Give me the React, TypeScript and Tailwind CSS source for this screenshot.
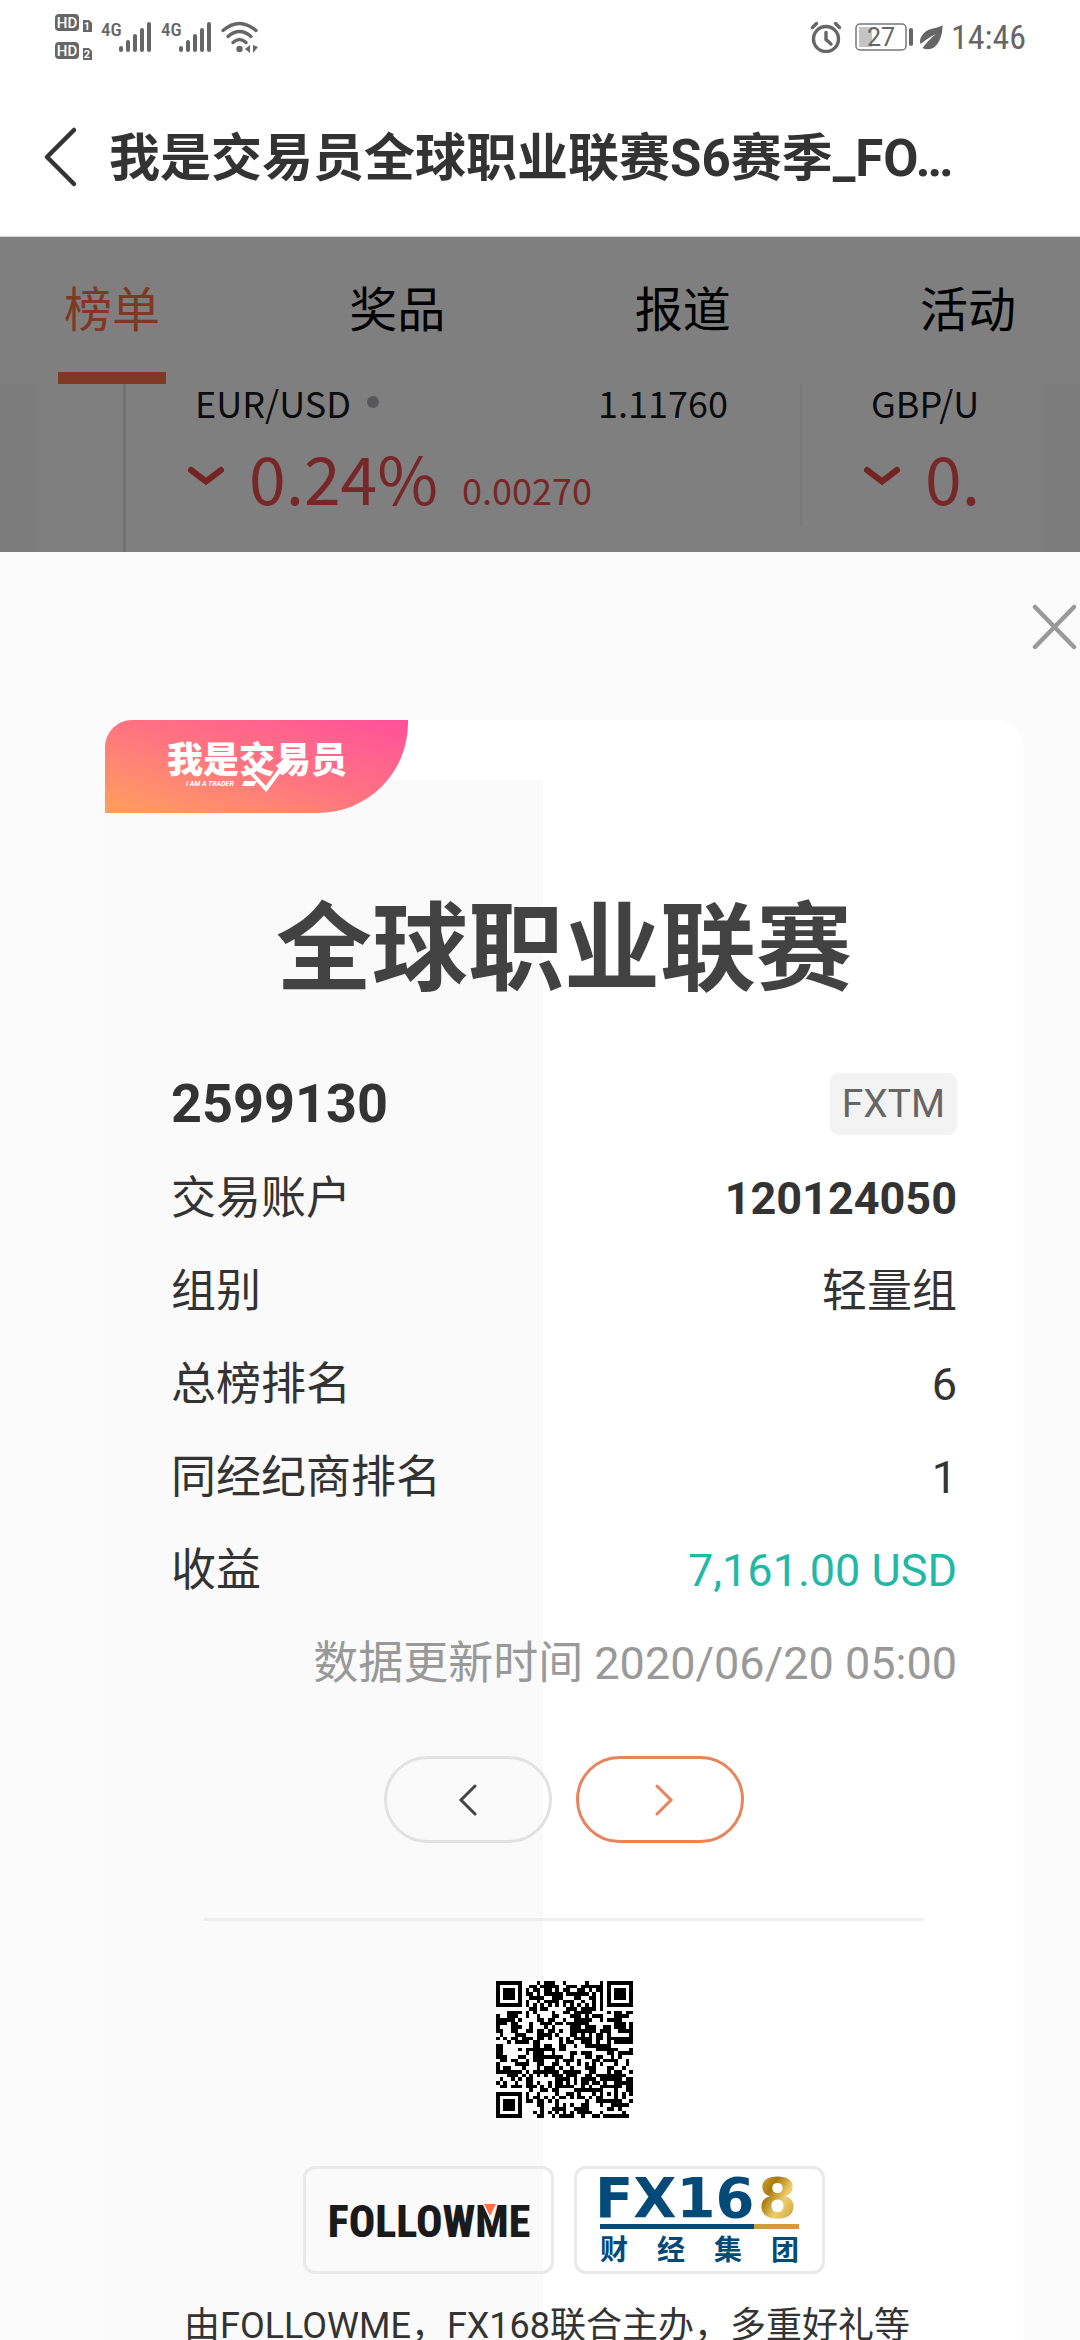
import { Fragment } from "react";

interface Quote {
  pair: string;
  price?: string;
  percent: string;
  change?: string;
}

interface DetailRow {
  label: string;
  value: string;
  valueClass?: string;
}

const tabs = ["榜单", "奖品", "报道", "活动"];

const quotes: Quote[] = [
  { pair: "EUR/USD", price: "1.11760", percent: "0.24%", change: "0.00270" },
  { pair: "GBP/U", percent: "0." },
];

const details: DetailRow[] = [
  { label: "交易账户", value: "120124050", valueClass: "font-bold" },
  { label: "组别", value: "轻量组" },
  { label: "总榜排名", value: "6" },
  { label: "同经纪商排名", value: "1" },
  { label: "收益", value: "7,161.00 USD", valueClass: "text-[#22b8a6]" },
];

function HdIcon({ index }: { index: string }) {
  return (
    <svg width="38" height="18" viewBox="0 0 38 18" className="overflow-visible">
      <rect x="0" y="0" width="24" height="17" rx="4" fill="#666" />
      <text x="12" y="14" fontSize="15" fontWeight="500" textAnchor="middle" fill="#fff">
        HD
      </text>
      <path d="M28 6h6l3 3v9h-9z" fill="#666" />
      <text x="32" y="16" fontSize="11" fontWeight="700" textAnchor="middle" fill="#fff">
        {index}
      </text>
    </svg>
  );
}

function SignalIcon() {
  return (
    <svg width="52" height="32" viewBox="0 0 52 32" fill="#666" className="overflow-visible">
      <text x="0" y="15" fontSize="19" fontWeight="500" className="font-['Roboto_Condensed',Roboto]">
        4G
      </text>
      <rect x="18" y="25" width="4" height="6" rx="2" />
      <rect x="25" y="19" width="4" height="12" rx="2" />
      <rect x="32" y="13" width="4" height="18" rx="2" />
      <rect x="39" y="7" width="4" height="24" rx="2" />
      <rect x="46" y="1" width="4" height="30" rx="2" />
    </svg>
  );
}

function WifiIcon() {
  return (
    <svg width="38" height="32" viewBox="0 0 38 32" fill="none" stroke="#666" strokeWidth="3.4" strokeLinecap="round">
      <path d="M2 9.500Q18.500 -4.500 35 9.500" />
      <path d="M7 15.500Q18.500 5.500 30 15.500" />
      <path d="M12 21.500Q18.500 15.500 25 21.500" />
      <circle cx="18.500" cy="28" r="3.200" fill="#666" stroke="none" />
      <path d="M24 28l5-4v8zM32 24v8l5-6z" fill="#666" stroke="none" />
    </svg>
  );
}

function AlarmIcon() {
  return (
    <svg width="32" height="32" viewBox="0 0 32 32" fill="none" stroke="#666" strokeWidth="3.400" strokeLinecap="round">
      <circle cx="16" cy="18" r="12.500" />
      <path d="M16 11.500v7l5 4.500" />
      <path d="M2.500 6.500l4-4M29.500 6.500l-4-4" />
    </svg>
  );
}

function StatusBar() {
  return (
    <div className="flex h-[78px] items-center justify-between pl-[55px] pr-[54px] pb-1">
      <div className="flex items-center gap-2">
        <div className="flex flex-col gap-[10px]">
          <HdIcon index="1" />
          <HdIcon index="2" />
        </div>
        <SignalIcon />
        <SignalIcon />
        <WifiIcon />
      </div>
      <div className="flex items-center text-[#666]">
        <AlarmIcon />
        <svg className="ml-[13px]" width="60" height="28" viewBox="0 0 60 28">
          <rect x="1" y="1" width="50" height="26" rx="4" fill="none" stroke="#777" strokeWidth="1.500" />
          <rect x="4" y="4" width="13" height="20" fill="#c4c4c4" />
          <text x="26" y="23" fontSize="25" textAnchor="middle" fill="#666">
            27
          </text>
          <rect x="54" y="5" width="4" height="18" rx="2" fill="#666" />
        </svg>
        <svg className="ml-[5px]" width="23" height="25" viewBox="0 0 23 25">
          <path
            d="M22.500 0C18 4 10 2 4 8C0 12-0.500 16 0.500 19C5 15 10 12 16 9C10 14 6 18 2.500 23C7 25.500 13 24.500 17 19.500C21 14 22.500 8 22.500 0z"
            fill="#666"
          />
        </svg>
        <span className="ml-2 font-['Roboto_Condensed',Roboto,sans-serif] text-[34px] leading-10">14:46</span>
      </div>
    </div>
  );
}

function TickerItem({ quote }: { quote: Quote }) {
  return (
    <div className="flex w-[676px] shrink-0">
      <div className="flex-1 pl-[61px] pr-[72px]">
        <div className="flex items-center justify-between pl-2 text-[36px] leading-9 text-[#15161a]">
          <span className="flex items-center gap-4">
            {quote.pair}
            {quote.price && <i className="size-3 rounded-full bg-[#aeaeb2]" />}
          </span>
          <span>{quote.price}</span>
        </div>
        <div className="mt-4 flex items-baseline text-[#ee4f4f]">
          <svg
            width="38"
            height="22"
            viewBox="0 0 38 22"
            className="shrink-0 self-center"
            fill="none"
            stroke="#e84646"
            strokeWidth="6"
            strokeLinecap="round"
          >
            <path d="M4 5l15 11.500L34 5" />
          </svg>
          <span className="ml-6 text-[66px] leading-[80px]">{quote.percent}</span>
          <span className="ml-6 text-[36px]">{quote.change}</span>
        </div>
      </div>
      <div className="h-[143px] w-[2px] bg-[#f2f2f2]" />
    </div>
  );
}

// Version 5 symbol: 37 modules a side, three finders and one alignment mark.
const QR_SIZE = 37;

function ring(dx: number, dy: number, outer: number) {
  const d = Math.max(Math.abs(dx), Math.abs(dy));
  if (outer === 3) return d === 3 || d <= 1;
  return d === 2 || d === 0;
}

function buildQrPath() {
  let seed = 2599130;
  let path = "";
  for (let y = 0; y < QR_SIZE; y++) {
    for (let x = 0; x < QR_SIZE; x++) {
      seed = (seed * 1103515245 + 12345) % 2147483648;
      let dark = seed / 2147483648 > 0.46;
      if (x === 6 && y > 7 && y < 29) dark = y % 2 === 0;
      if (y === 6 && x > 7 && x < 29) dark = x % 2 === 0;
      for (const [cx, cy] of [[3, 3], [33, 3], [3, 33]]) {
        const far = Math.max(Math.abs(x - cx), Math.abs(y - cy));
        if (far <= 4) dark = far < 4 && ring(x - cx, y - cy, 3);
      }
      if (Math.abs(x - 30) <= 2 && Math.abs(y - 30) <= 2) dark = ring(x - 30, y - 30, 2);
      if (dark) path += `M${x} ${y}h1v1h-1z`;
    }
  }
  return path;
}

function QrCode() {
  return (
    <svg className="size-[137px] bg-white" viewBox="0 0 37 37" shapeRendering="crispEdges" role="img">
      <path d={buildQrPath()} fill="#000" />
    </svg>
  );
}

function BrandRibbon() {
  return (
    <div className="h-[93px] w-[303px] rounded-tl-[27px] rounded-br-[90px] bg-linear-to-tr from-[#ff9f5a] via-[#ff7380] to-[#ff4f9a]">
      <svg width="303" height="93" viewBox="0 0 303 93" fill="#fff">
        <text x="62" y="53" fontSize="36" fontWeight="900" className="font-['Noto_Sans_CJK_SC']">
          我是交易员
        </text>
        <text x="81" y="66" fontSize="7" fontWeight="700" fontStyle="italic">
          I AM A TRADER
        </text>
        <path d="M139 61h13l-3 5h-12z" />
        <path d="M140 46l21 23 17-23" fill="none" stroke="#fff" strokeWidth="4" />
        <path d="M182 43l-2 10-7-6z" />
      </svg>
    </div>
  );
}

function FollowmeLogo() {
  return (
    <svg width="202" height="40" viewBox="0 0 202 40" className="overflow-visible">
      <text x="101" y="37" fontSize="44" fontWeight="800" fill="#1a1a1a" textAnchor="middle" className="font-['Roboto_Condensed',Roboto]">
        FOLLOWME
      </text>
      <path d="M154 3h16l-8 17z" fill="#fafafa" />
      <path d="M156 4h12l-6 12z" fill="#ff7043" />
    </svg>
  );
}

function Fx168Logo() {
  return (
    <div className="flex w-[199px] flex-col text-[#034a78]">
      <svg width="199" height="58" viewBox="0 0 199 58" className="overflow-visible">
        <defs>
          <linearGradient id="gold" x1="0" y1="0" x2="1" y2="1">
            <stop offset="0" stopColor="#e8c25a" />
            <stop offset="0.35" stopColor="#a87a10" />
            <stop offset="0.6" stopColor="#f0cf70" />
            <stop offset="1" stopColor="#b98c22" />
          </linearGradient>
        </defs>
        <text x="-5" y="46" fontSize="56" fontWeight="700" fill="#034a78" className="font-['DejaVu_Sans']">
          FX16
        </text>
        <text x="158" y="46" fontSize="56" fontWeight="700" fill="url(#gold)" className="font-['DejaVu_Sans']">
          8
        </text>
        <rect x="0" y="53" width="154" height="5" fill="#034a78" />
        <rect x="154" y="53" width="45" height="5" fill="#cc9f3c" />
      </svg>
      <div className="flex justify-between pt-1 text-[28px] leading-9 font-bold">
        {["财", "经", "集", "团"].map((char) => (
          <span key={char}>{char}</span>
        ))}
      </div>
    </div>
  );
}

export default function App() {
  return (
    <div className="flex h-screen flex-col overflow-hidden bg-white font-[Roboto,'Noto_Sans_CJK_SC',sans-serif] text-[#333]">
      <header className="shrink-0 border-b border-[#d8d8d8]">
        <StatusBar />
        <div className="flex h-[158px] items-center pl-[43px]">
          <button type="button" aria-label="返回">
            <svg
              width="36"
              height="62"
              viewBox="0 0 36 62"
              fill="none"
              stroke="#333"
              strokeWidth="4.500"
              strokeLinecap="round"
              strokeLinejoin="round"
            >
              <path d="M31 4L4 31l27 27" />
            </svg>
          </button>
          <h1 className="ml-[30px] pt-1 text-[51px] font-bold whitespace-nowrap">我是交易员全球职业联赛S6赛季_FO…</h1>
        </div>
      </header>

      <div className="relative h-[315px] shrink-0 overflow-hidden bg-white">
        <nav className="flex h-[147px] justify-between px-[58px]">
          {tabs.map((tab, index) => (
            <a
              key={tab}
              href="#"
              className={
                index === 0
                  ? "flex w-[108px] items-center justify-center border-b-12 border-[#ff7043] pt-3 text-[48px] leading-[64px] text-[#ff7043]"
                  : "flex w-[108px] items-center justify-center border-b-12 border-transparent pt-3 text-[48px] leading-[64px] text-black"
              }
            >
              {tab}
            </a>
          ))}
        </nav>
        <div className="flex h-[168px] bg-[#f8f8f8] px-[38px]">
          <div className="flex w-full bg-white pl-[85px] pr-[62px]">
            <div className="w-[3px] shrink-0 bg-[#e2e2e2]" />
            <div className="flex min-w-0 flex-1 overflow-hidden font-['Noto_Sans_CJK_SC',sans-serif]">
              {quotes.map((quote) => (
                <TickerItem key={quote.pair} quote={quote} />
              ))}
            </div>
          </div>
        </div>
        <div className="absolute inset-0 bg-black/50" />
      </div>

      <main className="flex flex-1 flex-col bg-[#fbfbfb]">
        <div className="flex h-[168px] shrink-0 items-start justify-end pt-[52px] pr-[3px]">
          <button type="button" aria-label="关闭">
            <svg width="46" height="46" viewBox="0 0 46 46" stroke="#999" strokeWidth="4.500" strokeLinecap="round">
              <path d="M4 3l39 40M43 3L4 43" />
            </svg>
          </button>
        </div>

        <section className="relative mr-[57px] ml-[105px] flex-1 rounded-t-[27px] bg-white">
          <div className="absolute top-[60px] bottom-0 left-0 w-[438px] bg-[#fafafa]" />
          <div className="relative">
            <BrandRibbon />
            <h2 className="mt-[70px] text-center text-[96px] leading-[132px] font-bold text-[#424242]">全球职业联赛</h2>

            <div className="mt-10 px-[66px] text-[45px]">
              <div className="flex h-[97px] items-center justify-between">
                <strong className="text-[54px]">2599130</strong>
                <span className="rounded-[9px] bg-[#f3f3f3] px-3 text-[39px] leading-[62px] text-[#666]">FXTM</span>
              </div>
              <dl className="grid grid-cols-[auto_auto] justify-between">
                {details.map((row) => (
                  <Fragment key={row.label}>
                    <dt className="leading-[93px]">{row.label}</dt>
                    <dd className={`text-right leading-[93px] ${row.valueClass ?? ""}`}>{row.value}</dd>
                  </Fragment>
                ))}
              </dl>
              <p className="text-right leading-[93px] text-[#999]">数据更新时间 2020/06/20 05:00</p>
            </div>

            <div className="mt-[46px] flex justify-center gap-6">
              <button
                type="button"
                aria-label="上一个"
                className="flex h-[87px] w-[168px] items-center justify-center rounded-full border-3 border-[#e2e2e2]"
              >
                <svg width="20" height="34" viewBox="0 0 20 34" fill="none" stroke="#444" strokeWidth="3" strokeLinecap="round">
                  <path d="M17 3L3 17l14 14" />
                </svg>
              </button>
              <button
                type="button"
                aria-label="下一个"
                className="flex h-[87px] w-[168px] items-center justify-center rounded-full border-3 border-[#e9835a] pl-2"
              >
                <svg width="20" height="34" viewBox="0 0 20 34" fill="none" stroke="#e9835a" strokeWidth="3" strokeLinecap="round">
                  <path d="M3 3l14 14L3 31" />
                </svg>
              </button>
            </div>

            <hr className="mx-[99px] mt-[75px] border-t-3 border-[#eee]" />

            <div className="mt-[60px] flex justify-center">
              <QrCode />
            </div>

            <div className="mt-12 flex justify-center gap-5">
              <div className="flex h-[108px] w-[251px] items-center justify-center rounded-xl border-3 border-[#e9e9e9]">
                <FollowmeLogo />
              </div>
              <div className="flex h-[108px] w-[251px] items-center justify-center rounded-xl border-3 border-[#e9e9e9]">
                <Fx168Logo />
              </div>
            </div>

            <p className="mt-8 pl-[79px] text-[36px] leading-10 whitespace-nowrap">由FOLLOWME，FX168联合主办，多重好礼等</p>
          </div>
        </section>
      </main>
    </div>
  );
}
